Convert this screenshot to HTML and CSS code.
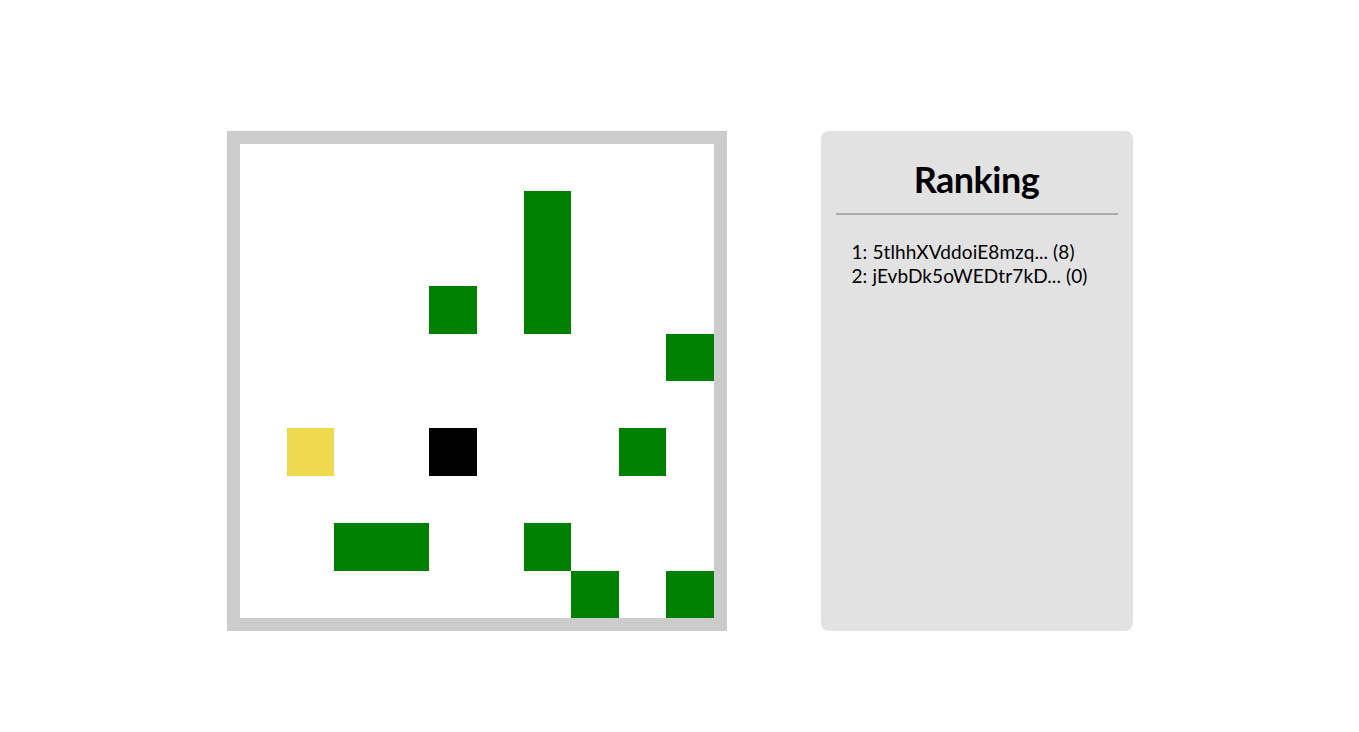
FILE: index.html
```html
<!DOCTYPE html>
<html>
<head>
<meta charset="utf-8">
<link rel="stylesheet" href="styles.css">
</head>
<body>
<div class="page">
  <div class="board">
    <div class="grid">
      <div class="cell food" style="grid-column:7;grid-row:2"></div>
      <div class="cell food" style="grid-column:7;grid-row:3"></div>
      <div class="cell food" style="grid-column:7;grid-row:4"></div>
      <div class="cell food" style="grid-column:5;grid-row:4"></div>
      <div class="cell food" style="grid-column:10;grid-row:5"></div>
      <div class="cell me" style="grid-column:2;grid-row:7"></div>
      <div class="cell other" style="grid-column:5;grid-row:7"></div>
      <div class="cell food" style="grid-column:9;grid-row:7"></div>
      <div class="cell food" style="grid-column:3;grid-row:9"></div>
      <div class="cell food" style="grid-column:4;grid-row:9"></div>
      <div class="cell food" style="grid-column:7;grid-row:9"></div>
      <div class="cell food" style="grid-column:8;grid-row:10"></div>
      <div class="cell food" style="grid-column:10;grid-row:10"></div>
    </div>
  </div>
  <div class="ranking">
    <h1 class="ranking-title">Ranking</h1>
    <hr class="ranking-rule">
    <ol class="ranking-list">
      <li>1: 5tlhhXVddoiE8mzq... (8)</li>
      <li>2: jEvbDk5oWEDtr7kD... (0)</li>
    </ol>
  </div>
</div>
</body>
</html>
```
FILE: styles.css
```css
html, body {
  margin: 0;
  padding: 0;
  background: #ffffff;
  font-family: Lato, "Open Sans", sans-serif;
  color: #000;
}
.page {
  display: flex;
  justify-content: center;
  align-items: flex-start;
  gap: 94px;
  padding-top: 131px;
}
.board {
  width: 474px;
  height: 474px;
  border: 13px solid #cccccc;
  background: #ffffff;
}
.grid {
  display: grid;
  width: 474px;
  height: 474px;
  grid-template-columns: repeat(10, 1fr);
  grid-template-rows: repeat(10, 1fr);
}
.cell.food { background: #008000; }
.cell.me { background: #efd94f; }
.cell.other { background: #000000; }
.ranking {
  width: 312px;
  height: 500px;
  box-sizing: border-box;
  background: #e2e2e2;
  border-radius: 8px;
  padding: 0 15px;
}
.ranking-title {
  margin: 0;
  padding-top: 25px;
  height: 55px;
  text-align: center;
  font-size: 36px;
  font-weight: 700;
  line-height: 46px;
  letter-spacing: -0.5px;
}
.ranking-rule {
  margin: 2px 0 0 0;
  border: none;
  height: 2px;
  background: #aaaaaa;
}
.ranking-list {
  list-style: none;
  margin: 0;
  padding: 25px 0 0 16px;
  font-size: 19px;
  line-height: 24px;
  letter-spacing: 0.1px;
}
```
